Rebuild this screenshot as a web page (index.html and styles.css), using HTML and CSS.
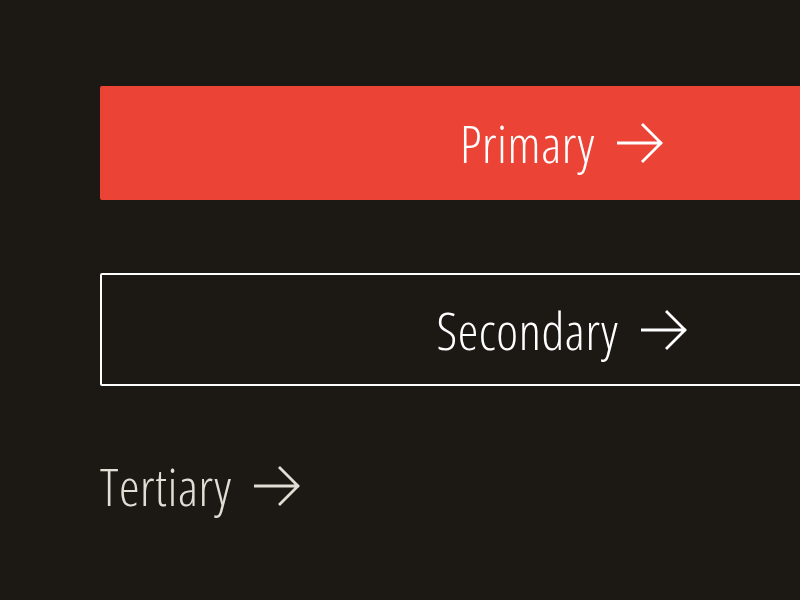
FILE: index.html
```html
<!DOCTYPE html>
<html lang="en">
<head>
    <meta charset="UTF-8">
    <meta name="viewport" content="width=device-width, initial-scale=1.0">
    <title>Buttons</title>
    <link rel="stylesheet" href="styles.css">
</head>
<body>

    <div class="buttons">
        <button class="btn btn-primary">
            <span>Primary</span>
            <svg class="arrow" viewBox="0 0 48 40"><path d="M1 20 H46 M26 1 L45 20 L26 39"/></svg>
        </button>

        <button class="btn btn-secondary">
            <span>Secondary</span>
            <svg class="arrow" viewBox="0 0 48 40"><path d="M1 20 H46 M26 1 L45 20 L26 39"/></svg>
        </button>

        <a class="btn-tertiary" href="#">
            <span>Tertiary</span>
            <svg class="arrow" viewBox="0 0 48 40"><path d="M1 20 H46 M26 1 L45 20 L26 39"/></svg>
        </a>
    </div>

</body>
</html>
```

FILE: styles.css
```css
body {
    margin: 0;
    background-color: #1c1915;
    font-family: "Open Sans", "Roboto Condensed", sans-serif;
    font-weight: 300;
    font-stretch: 75%;
    overflow: hidden;
    height: 600px;
}
.buttons {
    display: flex;
    flex-direction: column;
    align-items: flex-start;
    padding: 86px 0 0 100px;
}
.btn {
    display: flex;
    align-items: center;
    justify-content: center;
    gap: 21px;
    flex-shrink: 0;
    width: 924px;
    height: 114px;
    padding: 0;
    border: none;
    font: inherit;
    font-size: 52px;
    line-height: 52px;
    letter-spacing: 0.6px;
    color: #fff;
    cursor: pointer;
}
.btn-primary {
    background-color: #ec4337;
    border-radius: 2px;
}
.btn-secondary {
    margin-top: 73px;
    height: 113px;
    background: transparent;
    border: 2px solid #fff;
    border-radius: 2px;
}
.btn-tertiary {
    display: flex;
    align-items: center;
    gap: 21px;
    margin-top: 74px;
    font-size: 52px;
    line-height: 52px;
    letter-spacing: 0.6px;
    color: #e2ded6;
    text-decoration: none;
}
.arrow {
    width: 48px;
    height: 40px;
    fill: none;
    stroke: currentColor;
    stroke-width: 2.8;
}
```
